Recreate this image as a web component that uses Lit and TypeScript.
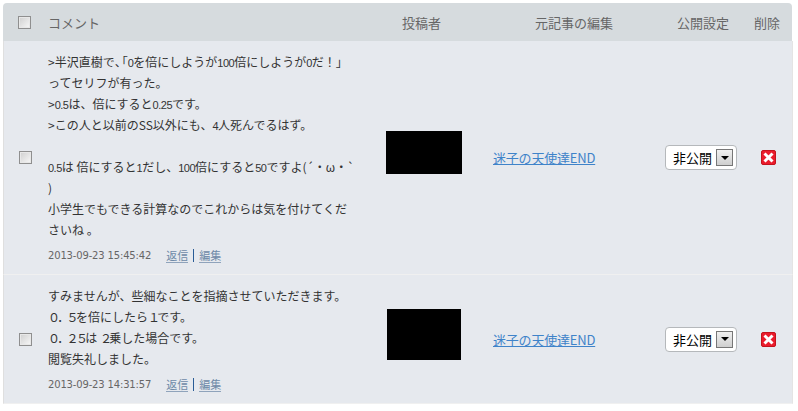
import { LitElement, html, css } from "lit";
import { customElement } from "lit/decorators.js";

const rows = [
  {
    lines: [
      ">半沢直樹で、「0を倍にしようが100倍にしようが0だ！」",
      "ってセリフが有った。",
      ">0.5は、倍にすると0.25です。",
      ">この人と以前のSS以外にも、4人死んでるはず。",
      "\u00a0",
      "0.5は 倍にすると1だし、100倍にすると50ですよ(´・ω・`",
      ")",
      "小学生でもできる計算なのでこれからは気を付けてくだ",
      "さいね 。",
    ],
    date: "2013-09-23 15:45:42",
    box: "box-a",
  },
  {
    lines: [
      "すみませんが、些細なことを指摘させていただきます。",
      "０．５を倍にしたら１です。",
      "０．２５は ２乗した場合です。",
      "閲覧失礼しました。",
    ],
    date: "2013-09-23 14:31:57",
    box: "box-b",
  },
];

/** Splits a line so that digits and punctuation can take the narrower metrics of the reference. */
function runs(line: string) {
  return line.split(/([0-9.]+|[０-９．]+|、(?=「))/).map((part) => {
    if (/^[0-9.]+$/.test(part)) return html`<span class="narrow">${part}</span>`;
    if (/^[０-９．]+$/.test(part)) return html`<span class="wide">${part}</span>`;
    if (part === "、") return html`<span class="comma">${part}</span>`;
    return part;
  });
}

@customElement("app-root")
export class AppRoot extends LitElement {
  static styles = css`
    :host {
      display: block;
      width: 798px;
      height: 411px;
      overflow: hidden;
      background: #fff;
      font-family: "Noto Sans CJK JP", "Liberation Sans", sans-serif;
      font-size: 12px;
      color: #333;
    }
    .table {
      margin: 3px 5px 0 3px;
    }
    .row {
      display: grid;
      grid-template-columns: 45px 328px 96px 188px 90px 1fr;
      align-items: center;
    }
    .head {
      height: 38px;
      margin-right: 1px;
      background: #d6dbde;
      border-radius: 4px 4px 0 0;
      color: #666;
      font-size: 13px;
    }
    .head .poster-h { margin-left: 26px; }
    .head .source-h { margin-left: 63px; }
    .head .public-h { margin-left: 17px; }
    .head .delete-h { margin-left: 4px; }
    .body {
      grid-template-columns: 44px 328px 96px 188px 90px 1fr;
      background: #e6e9ee;
      border-bottom: 1px solid #f0f0f0;
      border-left: 1px solid #dfdfdf;
      border-right: 1px solid #e4e4e4;
    }
    .check {
      justify-self: center;
      margin-left: -2px;
      width: 13px;
      height: 13px;
      box-sizing: border-box;
      border: 1px solid #8f8f8f;
      background: linear-gradient(135deg, #cfcfcf, #f8f8f8);
      box-shadow: inset 0 0 0 1px #e8e8e8;
    }
    .comment { padding: 10px 0 9px; }
    .text { color: #333; }
    .text div { white-space: nowrap; height: 21px; line-height: 21px; }
    .narrow {
      font-family: "Liberation Sans", sans-serif;
      font-size: 11px;
      line-height: 1;
      letter-spacing: -0.5px;
    }
    .wide { letter-spacing: -2.7px; }
    .comma { letter-spacing: -5px; }
    .meta {
      display: flex;
      align-items: center;
      margin-top: 5px;
      height: 20px;
      font-size: 10px;
      color: #666;
      font-family: "DejaVu Sans", sans-serif;
      letter-spacing: -0.16px;
    }
    .meta a {
      font-family: "Noto Sans CJK JP", sans-serif;
      font-size: 11px;
      letter-spacing: 0;
      color: #6e8aa8;
      border-bottom: 1px solid #8fa3bb;
      line-height: 14px;
    }
    .meta .reply { margin-left: 15px; }
    .meta .sep { width: 1px; height: 13px; background: #2a5c96; margin: 0 5px; }
    .poster { justify-self: center; background: #000; margin-bottom: 10px; }
    .box-a { width: 76px; height: 43px; }
    .box-b { width: 74px; height: 51px; }
    .link {
      color: #3f83c9;
      text-decoration: underline;
      font-size: 13px;
      letter-spacing: -0.2px;
      justify-self: start;
      margin-left: 21px;
    }
    .select {
      display: flex;
      align-items: center;
      justify-content: space-between;
      box-sizing: border-box;
      width: 72px;
      height: 25px;
      margin-left: 5px;
      padding: 0 3px 0 7px;
      background: #fff;
      border: 1px solid #b5b8bb;
      border-radius: 4px;
      color: #000;
      font-size: 13px;
    }
    .arrow {
      display: flex;
      align-items: center;
      justify-content: center;
      box-sizing: border-box;
      width: 17px;
      height: 17px;
      border: 1px solid #777;
      background: linear-gradient(#f0f0f0, #cfcfcf);
    }
    .arrow::after {
      content: "";
      border: 4px solid transparent;
      border-top: 4px solid #000;
      border-bottom: 0;
    }
    .del { display: block; margin-left: 11px; }
  `;

  private del() {
    return html`<svg class="del" width="15" height="15" viewBox="0 0 15 15">
      <rect x="0.5" y="0.5" width="14" height="14" rx="1.5" fill="#ea1c2c" stroke="#c4121c"></rect>
      <path d="M3.5 3.5L11.5 11.5M11.5 3.5L3.5 11.5" stroke="#fff" stroke-width="3"></path>
    </svg>`;
  }

  render() {
    return html`
      <div class="table">
        <div class="row head">
          <span class="check"></span>
          <span>コメント</span>
          <span class="poster-h">投稿者</span>
          <span class="source-h">元記事の編集</span>
          <span class="public-h">公開設定</span>
          <span class="delete-h">削除</span>
        </div>
        ${rows.map(
          (r) => html`
            <div class="row body">
              <span class="check"></span>
              <div class="comment">
                <div class="text">${r.lines.map((l) => html`<div>${runs(l)}</div>`)}</div>
                <div class="meta">
                  <span>${r.date}</span>
                  <a class="reply">返信</a><span class="sep"></span><a>編集</a>
                </div>
              </div>
              <div class="poster ${r.box}"></div>
              <a class="link">迷子の天使達END</a>
              <div class="select"><span>非公開</span><span class="arrow"></span></div>
              ${this.del()}
            </div>
          `
        )}
      </div>
    `;
  }
}
